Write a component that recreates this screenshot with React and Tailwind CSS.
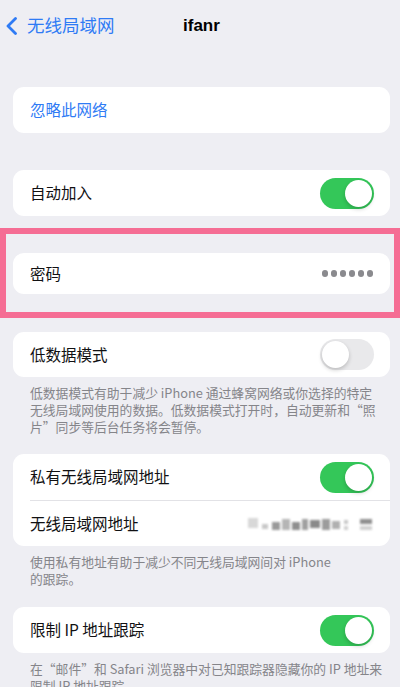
const font = { fontFamily: '"Noto Sans CJK SC", "Liberation Sans", sans-serif' };

function Toggle({ on }) {
  return (
    <div
      className={
        "w-[54px] h-[31px] rounded-full p-[2px] flex " +
        (on ? "bg-[#34c759] justify-end" : "bg-[#e9e9eb] justify-start")
      }
    >
      <div className="w-[27px] h-[27px] rounded-full bg-white shadow-[0_2px_4px_rgba(0,0,0,0.2)]" />
    </div>
  );
}

function Card({ children, className = "" }) {
  return (
    <div className={"mx-[13px] w-[377px] bg-white rounded-[11px] " + className}>
      {children}
    </div>
  );
}

function Row({ label, right, h = "h-[46px]", blue }) {
  return (
    <div className={"flex items-center justify-between pl-[17px] pr-[16px] " + h}>
      <span
        className={
          "text-[15.5px] " + (blue ? "text-[#2f7bf5]" : "text-[#111113]")
        }
      >
        {label}
      </span>
      {right}
    </div>
  );
}

function Footer({ lines, className = "" }) {
  return (
    <div className={"pl-[30px] text-[12.8px] leading-[17px] text-[#85858a] " + className}>
      {lines.map((l, i) => (
        <div key={i} className="whitespace-nowrap h-[17px]">{l}</div>
      ))}
    </div>
  );
}

function BlurredMac() {
  const blocks = [
    [0, 4, 10, 10, "#d8d8d8"],
    [14, 10, 6, 5, "#c8c8c8"],
    [24, 8, 8, 8, "#9a9a9a"],
    [34, 5, 8, 11, "#b5b5b5"],
    [44, 8, 8, 8, "#8f8f8f"],
    [54, 5, 6, 11, "#a0a0a0"],
    [62, 6, 10, 8, "#8a8a8a"],
    [74, 5, 8, 11, "#9c9c9c"],
    [84, 7, 8, 8, "#b0b0b0"],
    [96, 6, 4, 4, "#c8c8c8"],
    [96, 12, 4, 4, "#d0d0d0"],
    [112, 5, 12, 5, "#8f8f8f"],
    [112, 12, 12, 4, "#d0d0d0"],
  ];
  return (
    <div className="relative w-[126px] h-[20px] blur-[1.2px]">
      {blocks.map(([x, y, w, h, c], i) => (
        <div
          key={i}
          className="absolute"
          style={{ left: x, top: y, width: w, height: h, background: c }}
        />
      ))}
    </div>
  );
}

export default function App() {
  return (
    <div className="w-[400px] h-[687px] overflow-hidden bg-[#eeeef3]" style={font}>
      {/* nav */}
      <div className="relative h-[50px] flex items-center">
        <div className="flex items-center pl-[5px] text-[#2f7bf5]">
          <svg width="13" height="18" viewBox="0 0 13 18" className="mt-[1px]">
            <path
              d="M10.5 1.5 L3 9 L10.5 16.5"
              fill="none"
              stroke="#2f7bf5"
              strokeWidth="2.8"
              strokeLinecap="round"
              strokeLinejoin="round"
            />
          </svg>
          <span className="ml-[9px] text-[17.5px]">无线局域网</span>
        </div>
        <span
          className="absolute left-[183px] top-[13px] text-[17px] font-bold text-black"
          style={{ fontFamily: '"Liberation Sans", sans-serif' }}
        >
          ifanr
        </span>
      </div>

      <Card className="mt-[37px]">
        <Row label="忽略此网络" blue />
      </Card>

      <Card className="mt-[37px]">
        <Row label="自动加入" right={<Toggle on />} />
      </Card>

      {/* highlighted */}
      <div className="mt-[12px] w-[400px] h-[90px] border-[6px] border-[#f56d94] pt-[19px]">
        <div className="ml-[7px] w-[377px] bg-white rounded-[11px]">
          <Row
            label="密码"
            h="h-[41px]"
            right={
              <div className="flex gap-[2.5px] pr-[1px]">
                {[0, 1, 2, 3, 4, 5].map((i) => (
                  <div key={i} className="w-[6.5px] h-[6.5px] rounded-full bg-[#8a8a8e]" />
                ))}
              </div>
            }
          />
        </div>
      </div>

      <Card className="mt-[14px]">
        <Row label="低数据模式" h="h-[45px]" right={<Toggle />} />
      </Card>
      <Footer
        className="mt-[7px]"
        lines={[
          "低数据模式有助于减少 iPhone 通过蜂窝网络或你选择的特定",
          "无线局域网使用的数据。低数据模式打开时，自动更新和“照",
          "片”同步等后台任务将会暂停。",
        ]}
      />

      <Card className="mt-[19px]">
        <Row label="私有无线局域网地址" right={<Toggle on />} />
        <div className="ml-[17px] h-px bg-[#e2e2e6]" />
        <Row label="无线局域网地址" h="h-[45px]" right={<BlurredMac />} />
      </Card>
      <Footer
        className="mt-[7px]"
        lines={["使用私有地址有助于减少不同无线局域网间对 iPhone", "的跟踪。"]}
      />

      <Card className="mt-[20px]">
        <Row label="限制 IP 地址跟踪" right={<Toggle on />} />
      </Card>
      <Footer
        className="mt-[7px]"
        lines={[
          "在“邮件”和 Safari 浏览器中对已知跟踪器隐藏你的 IP 地址来",
          "限制 IP 地址跟踪。",
        ]}
      />
    </div>
  );
}
